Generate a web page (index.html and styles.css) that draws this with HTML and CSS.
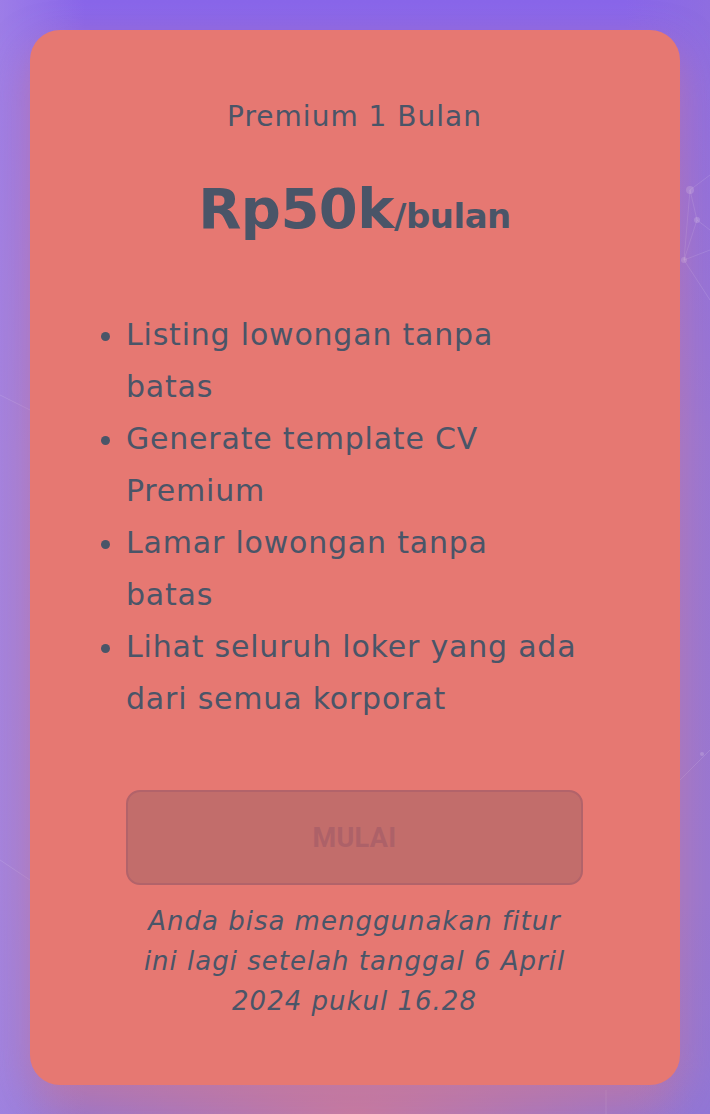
FILE: index.html
```html
<!DOCTYPE html>
<html lang="id">
<head>
<meta charset="utf-8">
<title>Premium 1 Bulan</title>
<link rel="stylesheet" href="styles.css">
</head>
<body>
<svg class="network" width="710" height="1114" viewBox="0 0 710 1114" aria-hidden="true">
  <g stroke="#ffffff" stroke-opacity="0.12" stroke-width="1" fill="none">
    <line x1="690" y1="190" x2="710" y2="175"/>
    <line x1="690" y1="190" x2="697" y2="220"/>
    <line x1="697" y1="220" x2="684" y2="260"/>
    <line x1="690" y1="190" x2="684" y2="260"/>
    <line x1="697" y1="220" x2="710" y2="230"/>
    <line x1="684" y1="260" x2="710" y2="300"/>
    <line x1="684" y1="260" x2="710" y2="250"/>
    <line x1="680" y1="780" x2="710" y2="750"/>
    <line x1="0" y1="395" x2="30" y2="410"/>
    <line x1="0" y1="860" x2="30" y2="880"/>
    <line x1="606" y1="1090" x2="606" y2="1114"/>
  </g>
  <g fill="#ffffff" fill-opacity="0.18">
    <circle cx="690" cy="190" r="4"/>
    <circle cx="697" cy="220" r="3"/>
    <circle cx="684" cy="260" r="3"/>
    <circle cx="702" cy="754" r="2"/>
  </g>
</svg>
<main class="page">
  <section class="card">
    <h2 class="plan">Premium 1 Bulan</h2>
    <p class="price"><span class="amount">Rp50k</span><span class="per">/bulan</span></p>
    <div class="column">
      <ul class="features">
        <li>Listing lowongan tanpa batas</li>
        <li>Generate template CV Premium</li>
        <li>Lamar lowongan tanpa batas</li>
        <li>Lihat seluruh loker yang ada dari semua korporat</li>
      </ul>
      <button class="start" type="button" disabled>MULAI</button>
      <p class="note">Anda bisa menggunakan fitur ini lagi setelah tanggal 6 April 2024 pukul 16.28</p>
    </div>
  </section>
</main>
</body>
</html>
```

FILE: styles.css
```css
html, body {
  margin: 0;
  padding: 0;
}
body {
  width: 710px;
  height: 1114px;
  overflow: hidden;
  position: relative;
  font-family: "DejaVu Sans", "Noto Sans", sans-serif;
  color: #4a5568;
  background:
    radial-gradient(ellipse 340px 120px at 355px 1114px, rgba(200, 122, 160, 0.9), rgba(200, 122, 160, 0) 100%),
    linear-gradient(90deg, rgba(170, 140, 230, 0.6) 0%, rgba(170, 140, 230, 0) 12%, rgba(170, 140, 230, 0) 88%, rgba(150, 120, 210, 0.4) 100%),
    linear-gradient(180deg, #8966ea 0%, #9a76d6 40%, #9a78d2 80%, #8e75d8 100%);
}
.network {
  position: absolute;
  left: 0;
  top: 0;
}
.page {
  position: relative;
  padding: 30px;
}
.card {
  box-sizing: border-box;
  width: 650px;
  height: 1055px;
  background: #e67872;
  border-radius: 30px;
  box-shadow: 0 18px 40px rgba(210, 120, 140, 0.55);
  padding: 96px 97px 0 96px;
  display: flex;
  flex-direction: column;
  align-items: center;
}
.plan {
  margin: 0;
  font-weight: 400;
  font-size: 28px;
  letter-spacing: 1px;
  line-height: 42px;
  margin-top: -30px;
}
.price {
  margin: 40px 0 0;
  line-height: 62px;
  font-weight: 700;
  white-space: nowrap;
}
.amount {
  font-size: 56px;
  letter-spacing: -0.5px;
}
.per {
  font-size: 34px;
  letter-spacing: -0.5px;
}
.column {
  width: 457px;
  margin-top: 55px;
  display: flex;
  flex-direction: column;
}
.features {
  margin: 0;
  padding: 0;
  list-style: disc outside;
  font-size: 30px;
  letter-spacing: 0.8px;
  line-height: 52px;
}
.features li::marker {
  font-size: 30px;
}
.start {
  margin-top: 65px;
  height: 95px;
  width: 457px;
  box-sizing: border-box;
  border: 2px solid #b2636a;
  border-radius: 14px;
  background: #c26d6b;
  color: #ad6168;
  font-family: Roboto, "Liberation Sans", sans-serif;
  font-weight: 700;
  font-size: 27px;
  letter-spacing: 0.3px;
}
.note {
  margin: 16px 0 0;
  padding: 0 11px;
  text-align: center;
  font-style: italic;
  font-size: 26px;
  letter-spacing: 1px;
  line-height: 40px;
}
```
